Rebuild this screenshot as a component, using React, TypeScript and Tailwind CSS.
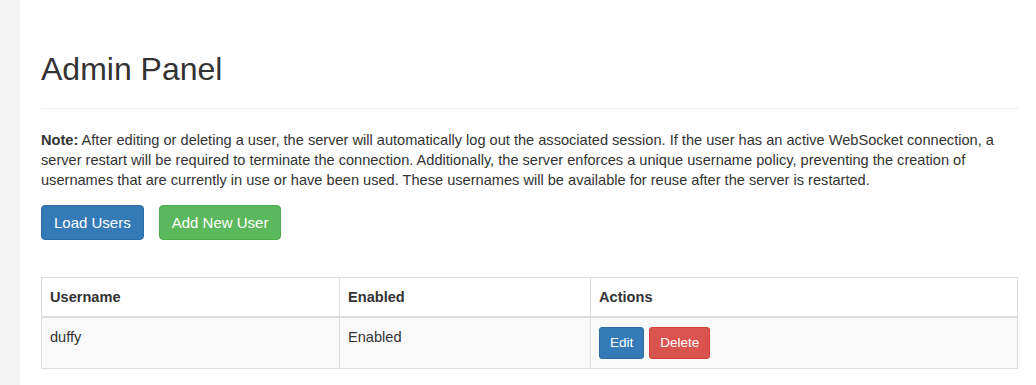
import React from "react";

type User = {
  username: string;
  enabled: boolean;
};

const users: User[] = [{ username: "duffy", enabled: true }];

const App: React.FC = () => {
  return (
    <div className="min-h-screen flex w-full bg-white font-['Liberation_Sans',Arial,sans-serif] text-[#333]">
      <div className="w-5 shrink-0 bg-[#f4f4f4]" />
      <main className="flex-1 pl-[21px] pr-[18px]">
        <div className="mt-[52px] mb-[21px] pb-[10px] border-b border-[#eee]">
          <h1 className="text-[32px] leading-[1.1] font-normal mb-[11px]">Admin Panel</h1>
        </div>

        <p className="text-[14.6px] leading-5">
          <strong className="font-bold">Note:</strong> After editing or deleting a user, the server will
          automatically log out the associated session. If the user has an active WebSocket connection, a
          server restart will be required to terminate the connection. Additionally, the server enforces a
          unique username policy, preventing the creation of usernames that are currently in use or have
          been used. These usernames will be available for reuse after the server is restarted.
        </p>

        <div className="mt-[15px] flex gap-[15px]">
          <button className="px-3 py-[6px] text-[15px] leading-[21px] text-white bg-[#337ab7] border border-[#2e6da4] rounded">
            Load Users
          </button>
          <button className="px-3 py-[6px] text-[15px] leading-[21px] text-white bg-[#5cb85c] border border-[#4cae4c] rounded">
            Add New User
          </button>
        </div>

        <table className="mt-[37px] w-full border-collapse border border-[#ddd] text-[14.6px] leading-5">
          <thead>
            <tr>
              <th className="w-[298px] text-left font-bold px-2 py-[9px] border border-[#ddd] border-b-2">Username</th>
              <th className="w-[251px] text-left font-bold px-2 py-[9px] border border-[#ddd] border-b-2">Enabled</th>
              <th className="text-left font-bold px-2 py-[9px] border border-[#ddd] border-b-2">Actions</th>
            </tr>
          </thead>
          <tbody>
            {users.map((u) => (
              <tr key={u.username} className="bg-[#f9f9f9]">
                <td className="align-top px-2 py-[9px] border border-[#ddd]">{u.username}</td>
                <td className="align-top px-2 py-[9px] border border-[#ddd]">{u.enabled ? "Enabled" : "Disabled"}</td>
                <td className="align-top px-2 py-[9px] border border-[#ddd]">
                  <div className="flex gap-[5px]">
                    <button className="px-[10px] py-[5px] text-[13.5px] leading-[20px] text-white bg-[#337ab7] border border-[#2e6da4] rounded-[3px]">
                      Edit
                    </button>
                    <button className="px-[10px] py-[5px] text-[13.5px] leading-[20px] text-white bg-[#d9534f] border border-[#d43f3a] rounded-[3px]">
                      Delete
                    </button>
                  </div>
                </td>
              </tr>
            ))}
          </tbody>
        </table>
      </main>
    </div>
  );
};

export default App;
